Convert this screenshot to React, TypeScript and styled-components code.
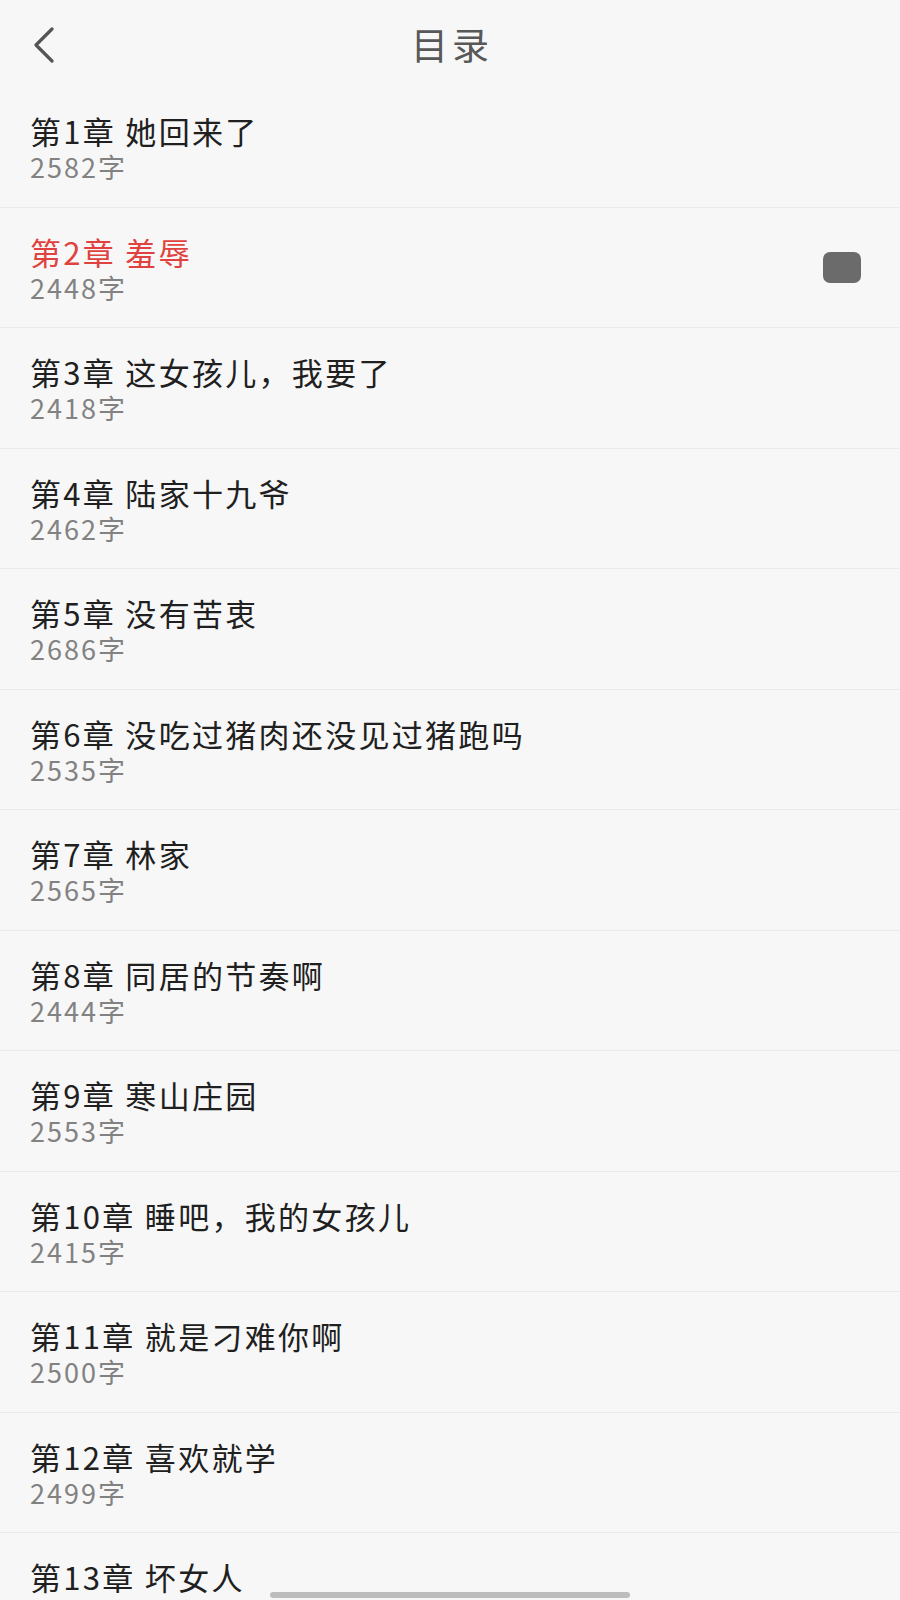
import React from "react";
import styled, { createGlobalStyle } from "styled-components";

const GlobalStyle = createGlobalStyle`
  html, body {
    margin: 0;
    padding: 0;
    background: #f7f7f7;
    overflow: hidden;
  }
  body {
    font-family: "Noto Sans CJK SC", "Noto Sans", sans-serif;
  }
`;

const chapters = [
  { title: "第1章 她回来了", words: 2582 },
  { title: "第2章 羞辱", words: 2448 },
  { title: "第3章 这女孩儿，我要了", words: 2418 },
  { title: "第4章 陆家十九爷", words: 2462 },
  { title: "第5章 没有苦衷", words: 2686 },
  { title: "第6章 没吃过猪肉还没见过猪跑吗", words: 2535 },
  { title: "第7章 林家", words: 2565 },
  { title: "第8章 同居的节奏啊", words: 2444 },
  { title: "第9章 寒山庄园", words: 2553 },
  { title: "第10章 睡吧，我的女孩儿", words: 2415 },
  { title: "第11章 就是刁难你啊", words: 2500 },
  { title: "第12章 喜欢就学", words: 2499 },
  { title: "第13章 坏女人", words: 0 },
];

const CURRENT = 1;

const StyledPageRoot = styled.div`
  width: 900px;
  height: 1600px;
  background: #f7f7f7;
  overflow: hidden;
  position: relative;
`;

const StyledHeader = styled.header`
  height: 87px;
  display: flex;
  align-items: center;
  justify-content: center;
  position: relative;
`;

const StyledBackButton = styled.button`
  position: absolute;
  left: 30px;
  top: 24px;
  width: 30px;
  height: 42px;
  padding: 0;
  border: none;
  background: none;
  display: flex;
  align-items: center;
  justify-content: center;
`;

const StyledTitle = styled.h1`
  margin: 0;
  padding-left: 4px;
  font-size: 37px;
  font-weight: 400;
  letter-spacing: 4px;
  color: #585858;
  line-height: 42px;
`;

const StyledList = styled.ul`
  list-style: none;
  margin: 0;
  padding: 0;
`;

const StyledRow = styled.li`
  height: 119.5px;
  box-sizing: content-box;
  border-bottom: 1px solid #ebebeb;
  padding: 0 39px 0 30px;
  display: flex;
  align-items: center;
`;

const StyledRowText = styled.div`
  flex: 1;
  display: flex;
  flex-direction: column;
  align-self: flex-start;
  padding-top: 25px;
`;

const StyledChapterName = styled.span<{ $active?: boolean }>`
  font-size: 31px;
  line-height: 38px;
  letter-spacing: 2.3px;
  color: ${(p) => (p.$active ? "#e0433f" : "#202020")};
`;

const StyledWordCount = styled.span`
  font-size: 27px;
  line-height: 34px;
  letter-spacing: 2px;
  color: #828282;
`;

const StyledMarker = styled.div`
  width: 38px;
  height: 31px;
  border-radius: 7px;
  background: #6b6b6b;
`;

const StyledHomeIndicator = styled.div`
  position: absolute;
  left: 270px;
  bottom: 2px;
  width: 360px;
  height: 6px;
  border-radius: 3px;
  background: #bdbdbd;
`;

const App = () => {
  return (
    <StyledPageRoot>
      <GlobalStyle />
      <StyledHeader>
        <StyledBackButton aria-label="返回">
          <svg width="22" height="36" viewBox="0 0 22 36">
            <polyline
              points="18,2 2,18 18,34"
              fill="none"
              stroke="#555555"
              strokeWidth="3.2"
              strokeLinecap="round"
              strokeLinejoin="round"
            />
          </svg>
        </StyledBackButton>
        <StyledTitle>目录</StyledTitle>
      </StyledHeader>
      <StyledList>
        {chapters.map((c, i) => (
          <StyledRow key={c.title}>
            <StyledRowText>
              <StyledChapterName $active={i === CURRENT}>
                {c.title}
              </StyledChapterName>
              {c.words > 0 && <StyledWordCount>{c.words}字</StyledWordCount>}
            </StyledRowText>
            {i === CURRENT && <StyledMarker />}
          </StyledRow>
        ))}
      </StyledList>
      <StyledHomeIndicator />
    </StyledPageRoot>
  );
};

export default App;
